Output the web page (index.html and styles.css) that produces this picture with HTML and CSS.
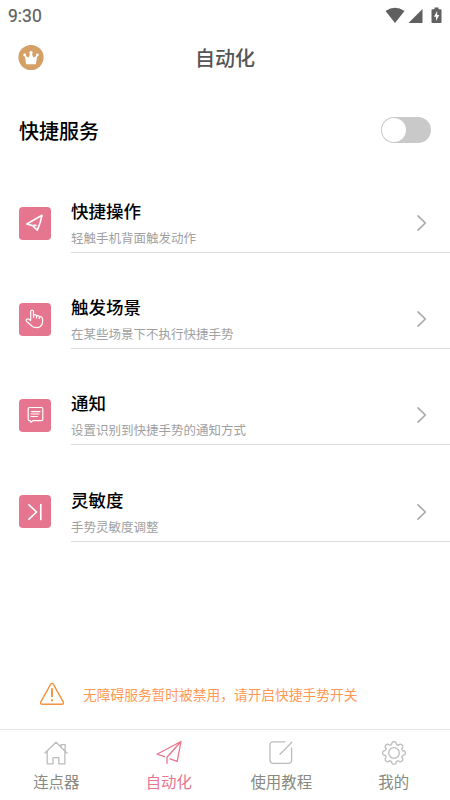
FILE: index.html
```html
<!DOCTYPE html>
<html lang="zh-CN">
<head>
<meta charset="utf-8">
<title>自动化</title>
<link rel="stylesheet" href="styles.css">
</head>
<body>
<div class="status">
  <span class="time">9:30</span>
  <svg class="status-icons" width="58" height="20" viewBox="0 0 58 20">
    <path d="M0.5 5Q10 -1.5 19.5 5L10 17z"/>
    <path d="M37.5 3v14h-14z"/>
    <path fill-rule="evenodd" d="M49.5 1.5h4v1.700h2.200q.8 0 .8.8v12.200q0 .8-.8.8h-8.400q-.8 0-.8-.8V4q0-.8.8-.8h2.200zM52.200 5l-3.300 5.800h2.100v4.200l3.300-6h-2.100z"/>
  </svg>
</div>
<header class="header">
  <svg class="crown" width="26" height="26" viewBox="0 0 26 26">
    <circle cx="13" cy="12.500" r="12.600" fill="#d5a066"/>
    <g fill="#fff"><path d="M8.200 19.300L6.600 10.500L10.700 12.600L12.200 8.500H13.800L15.300 12.600L19.400 10.500L17.800 19.300z"/><circle cx="6.700" cy="10" r="1.400"/><circle cx="13" cy="7.800" r="1.700"/><circle cx="19.300" cy="10" r="1.400"/></g>
  </svg>
  <h1>自动化</h1>
</header>
<section class="service">
  <h2>快捷服务</h2>
  <div class="switch"><span class="knob"></span></div>
</section>
<main class="list">
  <div class="row">
    <span class="tile"><svg width="20" height="20" viewBox="0 0 20 20"><path class="thick" d="M10.800 12.300L7.600 12.700L1.800 10.900L17 2.300Q15.300 10.500 12.300 17.200L7.800 13"/></svg></span>
    <div class="body"><div><h3>快捷操作</h3><p>轻触手机背面触发动作</p></div><svg class="chevron" width="12" height="18" viewBox="0 0 12 18"><path d="M2 1.800L9.300 9L2 16.200"/></svg></div>
  </div>
  <div class="row">
    <span class="tile"><svg width="20" height="20" viewBox="0 0 20 20"><path d="M5.700 11.500V2.600Q5.700 1.100 7.100 1.100T8.500 2.600V8.500V6.900Q8.800 5.600 10 5.600T11.500 7V9V7.600Q11.800 6.500 13 6.600T14.300 8V9.600V8.600Q14.600 7.600 15.700 7.700Q17.300 8 17.600 10V13Q17.600 16 15 17.700Q13.800 18.600 11.500 18.600Q8.300 18.600 6.600 16.800L2 12.800Q.500 11.300 1.600 10.300Q2.600 9.500 3.900 10.300L5.700 11.700"/></svg></span>
    <div class="body"><div><h3>触发场景</h3><p>在某些场景下不执行快捷手势</p></div><svg class="chevron" width="12" height="18" viewBox="0 0 12 18"><path d="M2 1.800L9.300 9L2 16.200"/></svg></div>
  </div>
  <div class="row">
    <span class="tile"><svg width="20" height="20" viewBox="0 0 20 20"><path d="M4.500 2.500h12q1.300 0 1.300 1.300v10.500q0 1.300-1.300 1.300H8.300L6 17.300l-1-1.700h-.500q-1.300 0-1.300-1.300V3.800q0-1.300 1.300-1.300zM6.500 6.600h8.500M6 9h8M6 11.500h6.500"/></svg></span>
    <div class="body"><div><h3>通知</h3><p>设置识别到快捷手势的通知方式</p></div><svg class="chevron" width="12" height="18" viewBox="0 0 12 18"><path d="M2 1.800L9.300 9L2 16.200"/></svg></div>
  </div>
  <div class="row">
    <span class="tile"><svg width="20" height="20" viewBox="0 0 20 20"><path class="thick" d="M4 2.800L11.500 10L4 17.200M15.800 2.500v15"/></svg></span>
    <div class="body"><div><h3>灵敏度</h3><p>手势灵敏度调整</p></div><svg class="chevron" width="12" height="18" viewBox="0 0 12 18"><path d="M2 1.800L9.300 9L2 16.200"/></svg></div>
  </div>
</main>
<div class="warning">
  <svg width="26" height="24" viewBox="0 0 26 24"><path d="M11.600 2.400Q13 .400 14.400 2.400L24.200 19.900Q25 22.100 22.700 22.300H3.300Q1 22.100 1.800 19.900z" stroke-width="1.400"/><path d="M13 7v7.300M13 18v.4" stroke-width="1.900"/></svg>
  <span>无障碍服务暂时被禁用，请开启快捷手势开关</span>
</div>
<nav class="tabs">
  <div class="tab">
    <svg width="26" height="26" viewBox="0 0 26 26"><path d="M2 13L13 2.200L24 13M4.200 11.500V23.800H10V17.600H15.800V23.800H21.900V11.500M18 6.500V4.600H22.200V10.500"/></svg>
    <span>连点器</span>
  </div>
  <div class="tab active">
    <svg width="26" height="26" viewBox="0 0 26 26"><path d="M8.500 16.600L1 14.200L25 1.500L21.200 21.300L14 18.800M25 1.500L11 17.200V23.300"/></svg>
    <span>自动化</span>
  </div>
  <div class="tab">
    <svg width="26" height="26" viewBox="0 0 26 26"><path d="M17 1.800H5.200Q2 1.800 2 5V20Q2 23.400 5.200 23.400H20.200Q23.600 23.400 23.600 20V8M12 14.300L23.800 2.200"/></svg>
    <span>使用教程</span>
  </div>
  <div class="tab">
    <svg width="26" height="26" viewBox="0 0 26 26"><defs><path id="tooth" d="M-2.430 -8.840L-1.900 -10.600Q-1.600 -11.300 0 -11.300T1.900 -10.600L2.430 -8.840Q3.300 -7.500 4.530 -7.970"/></defs>
    <g transform="translate(13 13)"><use href="#tooth"/><use href="#tooth" transform="rotate(45)"/><use href="#tooth" transform="rotate(90)"/><use href="#tooth" transform="rotate(135)"/><use href="#tooth" transform="rotate(180)"/><use href="#tooth" transform="rotate(225)"/><use href="#tooth" transform="rotate(270)"/><use href="#tooth" transform="rotate(315)"/><circle r="5.300"/></g></svg>
    <span>我的</span>
  </div>
</nav>
</body>
</html>
```

FILE: styles.css
```css
* { box-sizing: border-box; }
body {
  margin: 0;
  width: 450px;
  height: 800px;
  overflow: hidden;
  display: flex;
  flex-direction: column;
  background: #fff;
  font-family: "Noto Sans CJK SC", sans-serif;
}
h1, h2, h3, p { margin: 0; font-weight: 500; }
svg { display: block; flex: none; fill: none; stroke-linecap: round; stroke-linejoin: round; }
.status {
  height: 32px;
  padding: 0 7px 0 8px;
  display: flex;
  align-items: center;
  justify-content: space-between;
  color: #606060;
}
.time { font: 400 17.5px/32px Roboto, sans-serif; -webkit-text-stroke: 0.2px #606060; }
.status-icons { fill: #606060; margin-top: -1px; }
.header {
  height: 52px;
  display: grid;
  grid-template-columns: 90px 1fr 90px;
  align-items: center;
}
.crown { margin-left: 18px; }
h1 { font-size: 20px; line-height: 30px; text-align: center; color: #555; }
.service {
  height: 92px;
  padding: 0 19px;
  display: flex;
  align-items: center;
  justify-content: space-between;
}
h2 { font-size: 20px; line-height: 30px; padding-top: 2px; color: #000; }
.switch {
  width: 50px;
  height: 26px;
  border-radius: 13px;
  padding: 1px;
  background: #c9c9c9;
}
.knob { display: block; width: 24px; height: 24px; border-radius: 50%; background: #fff; }
.list { height: 385px; padding: 20px 0 0; margin-top: -19px; display: grid; grid-auto-rows: 96.200px; }
.row { display: flex; padding-left: 19px; gap: 20px; }
.tile {
  width: 32px;
  height: 33px;
  margin-top: 29.500px;
  border-radius: 4px;
  background: #e6758f;
  display: flex;
  align-items: center;
  justify-content: center;
}
.tile path { stroke: #fff; stroke-width: 1.2; }
.tile .thick { stroke-width: 1.7; }
.body {
  flex: 1;
  height: 76px;
  padding: 21px 22px 0 0;
  border-bottom: 1px solid #dcdcdc;
  display: flex;
  justify-content: space-between;
}
h3 { font-size: 17.5px; line-height: 26px; color: #000; }
p { font-size: 12.5px; line-height: 20px; margin-top: 4px; font-weight: 400; color: #a0a0a0; }
.chevron { margin-top: 16px; }
.chevron path { stroke: #aaa; stroke-width: 1.7; }
.warning {
  margin-top: auto;
  height: 71px;
  padding-left: 39px;
  display: flex;
  align-items: center;
  gap: 18px;
  font-size: 13.72px;
  color: #ff9955;
}
.warning svg { stroke: #f5923e; }
.tabs {
  height: 71px;
  border-top: 1px solid #e6e6e6;
  display: grid;
  grid-template-columns: repeat(4, 1fr);
}
.tab {
  display: flex;
  flex-direction: column;
  align-items: center;
  padding-top: 10px;
  gap: 4px;
  font-size: 15.4px;
  line-height: 23px;
  color: #888980;
}
.tab svg { stroke: #bcbcbc; stroke-width: 1.3; }
.active { color: #e6758f; }
.active svg { stroke: #e6758f; }
```
